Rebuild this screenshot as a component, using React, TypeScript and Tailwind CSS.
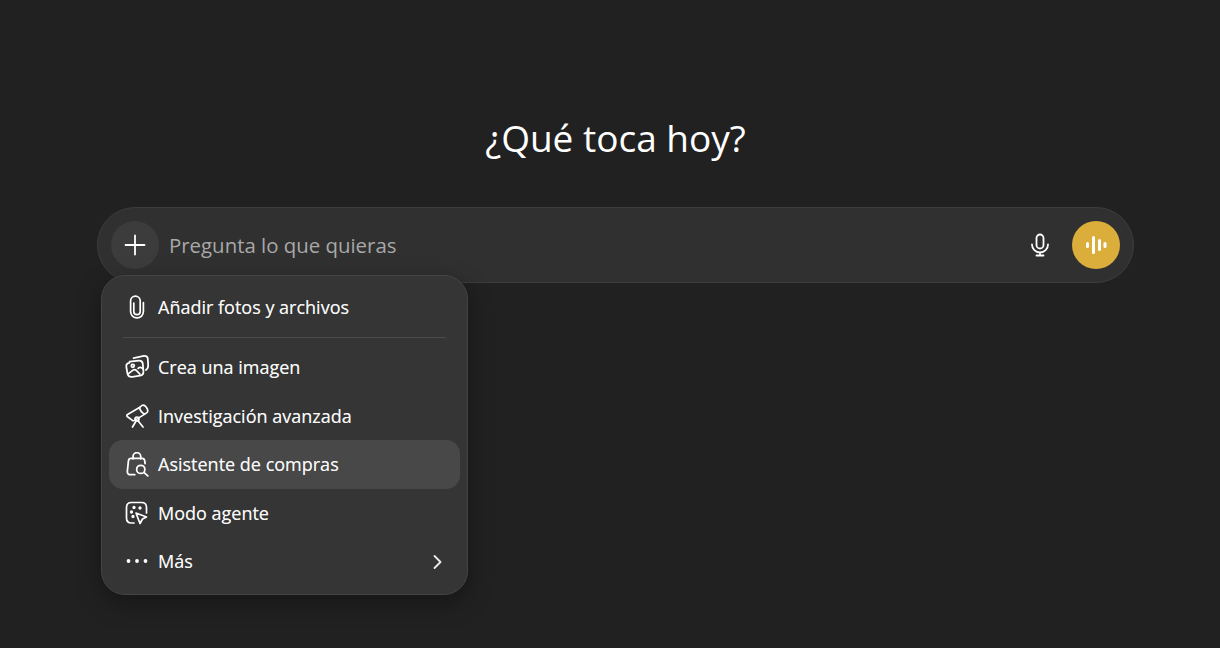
import React from "react";

const S = { fill: "none", stroke: "currentColor", strokeWidth: 1.7, strokeLinecap: "round", strokeLinejoin: "round" } as const;

const Clip = () => (
  <svg width="24" height="24" viewBox="0 0 24 24" {...S}>
    <path d="M8.800 8v8.500a3.200 3.200 0 0 0 6.400 0V6a4.800 4.800 0 0 0-9.600 0v10.500a6.400 6.400 0 0 0 12.800 0V7.500" />
  </svg>
);
const ImageIc = () => (
  <svg width="24" height="24" viewBox="1 2 21 20.500" {...S} strokeWidth={1.55}>
    <path d="M8.500 4.500 17.500 2.600c1.700-.2 3 .3 3.400 2l.4 6.400c0 2-.6 3-2 3.900" />
    <path d="M5 7.600 13 6.700c2-.2 3.400 1 3.600 2.900l.5 6.600c.1 2-1 3.400-3 3.700l-6.600.9c-2.500.3-4-.8-4.400-3l-.9-5.400c-.4-2.400.6-3.500 2.800-3.800Z" />
    <circle cx="7.800" cy="11.200" r="1.300" />
    <path d="M3.500 18.500 8 15c1-.7 2-.6 3 .3l3 3.200M16.800 14c-1.500-1.600-3-1.800-4.300-.6" />
  </svg>
);
const Scope = () => (
  <svg width="24" height="24" viewBox="0 0 24 24" {...S}>
    <path d="M2.500 10.500 14.500 3.500c1.200-.7 2-2.300 3.500-2.300 2.500 0 4.800 3.400 4.800 5.800 0 1.400-1 2-2.200 2.600l-11 6.800c-1 .6-1.800.4-2.500-.3l-4.600-3.300c-.8-.6-1-1.800 0-2.300Z" />
    <path d="M14.500 3.500c.5 2.500 2 5 5 6.600" />
    <circle cx="12" cy="15" r="2" />
    <path d="M10.800 17.500 7.500 23M13.200 17l4.800 6" />
  </svg>
);
const Bag = () => (
  <svg width="24" height="25" viewBox="1.500 1 21 22" {...S} strokeWidth={1.55}>
    <path d="M8.500 7V5a3.400 3.400 0 0 1 6.800 0V7" />
    <path d="M10 21H6.500c-2 0-3.200-1.200-3-3l1-9.500C4.700 7.300 5.500 6.600 6.800 6.600h9.800c1.200 0 2 .8 2.200 2l.3 2.700" />
    <circle cx="15.300" cy="16.300" r="3.600" />
    <path d="m18.300 19.200 3.200 2.800" />
  </svg>
);
const Agent = () => (
  <svg width="24" height="24" viewBox="0 0 24 24" {...S}>
    <path d="M9 22H6.500C3.500 22 1.500 20 1.500 17V6.500c0-3 2-5 5-5H16.500c3 0 5 2 5 5V12" />
    <path d="m11 12 10.500 4-4 2-2.500 4.500Z" />
    <circle cx="9" cy="6.500" r=".8" fill="currentColor" />
    <circle cx="6.500" cy="11" r=".8" fill="currentColor" />
    <circle cx="8" cy="15.500" r=".8" fill="currentColor" />
    <circle cx="15" cy="7" r=".8" fill="currentColor" />
  </svg>
);
const Dots = () => (
  <svg width="24" height="24" viewBox="0 0 24 24" fill="currentColor">
    <circle cx="3.500" cy="12" r="1.900" />
    <circle cx="12" cy="12" r="1.900" />
    <circle cx="20.500" cy="12" r="1.900" />
  </svg>
);

function Row({ icon, label, active, chevron }: { icon: React.ReactNode; label: string; active?: boolean; chevron?: boolean }) {
  return (
    <div className={`flex h-[48.500px] items-center rounded-[14px] pl-4 pr-3 ${active ? "bg-[#484848]" : ""}`}>
      <span className="mr-[9px] flex w-6 justify-center text-white">{icon}</span>
      <span className="flex-1 text-[18px] leading-6 text-[#f8f8f8] [text-shadow:0_0_0.4px_rgba(255,255,255,0.6)]">{label}</span>
      {chevron && (
        <svg width="20" height="20" viewBox="0 0 20 20" fill="none" stroke="#ececec" strokeWidth="1.800" strokeLinecap="round" strokeLinejoin="round" className="translate-y-px">
          <path d="m6.500 4 6 6-6 6" />
        </svg>
      )}
    </div>
  );
}

export default function App() {
  return (
    <div className="flex h-[648px] w-[1220px] flex-col items-center overflow-hidden bg-[#212121] pt-[112px] font-['Open_Sans','Noto_Sans',sans-serif]">
      <h1 className="ml-[11px] h-[52px] text-center text-[37px] leading-[52px] font-normal text-white">¿Qué toca hoy?</h1>
      <div className="relative mt-[43px] ml-[11px] flex h-[76px] w-[1037px] items-center rounded-[38px] border border-[#3d3d3d] bg-[#303030] pr-[13px] pl-[13px]">
        <div className="flex h-12 w-12 items-center justify-center rounded-full bg-[#3c3c3c] text-white">
          <svg width="22" height="22" viewBox="0 0 22 22" fill="none" stroke="currentColor" strokeWidth="1.800" strokeLinecap="round">
            <path d="M11 1.500v19M1.500 11h19" />
          </svg>
        </div>
        <span className="ml-[10px] flex-1 text-[20.400px] text-[#a8a8a8]">Pregunta lo que quieras</span>
        <span className="mr-[21px] text-white">
          <svg width="22" height="24" viewBox="0 0 22 24" fill="none" stroke="currentColor" strokeWidth="1.800" strokeLinecap="round">
            <rect x="7.500" y="1.500" width="7" height="14" rx="3.500" />
            <path d="M3 11.500a8 8 0 0 0 16 0M11 19.500v2.500M7.500 22.500h7" />
          </svg>
        </span>
        <div className="flex h-12 w-12 items-center justify-center rounded-full bg-[#dbae3b] text-white">
          <svg width="22" height="22" viewBox="0 0 22 22" fill="currentColor">
            <rect x="1" y="8" width="3" height="6" rx="1.500" />
            <rect x="7" y="2" width="3" height="18" rx="1.500" />
            <rect x="13" y="5" width="3" height="12" rx="1.500" />
            <rect x="18.500" y="8" width="3" height="6" rx="1.500" />
          </svg>
        </div>
        <div className="absolute top-[67px] left-[3px] w-[367px] rounded-[24px] border border-[#444444] bg-[#353535] px-[7px] pt-[7px] pb-[8px] shadow-[0_8px_24px_rgba(0,0,0,0.35)]">
          <Row icon={<Clip />} label="Añadir fotos y archivos" />
          <div className="mx-[14px] mt-[5px] mb-[5.500px] h-px bg-[#4a4a4a]" />
          <Row icon={<ImageIc />} label="Crea una imagen" />
          <Row icon={<Scope />} label="Investigación avanzada" />
          <Row icon={<Bag />} label="Asistente de compras" active />
          <Row icon={<Agent />} label="Modo agente" />
          <Row icon={<Dots />} label="Más" chevron />
        </div>
      </div>
    </div>
  );
}
